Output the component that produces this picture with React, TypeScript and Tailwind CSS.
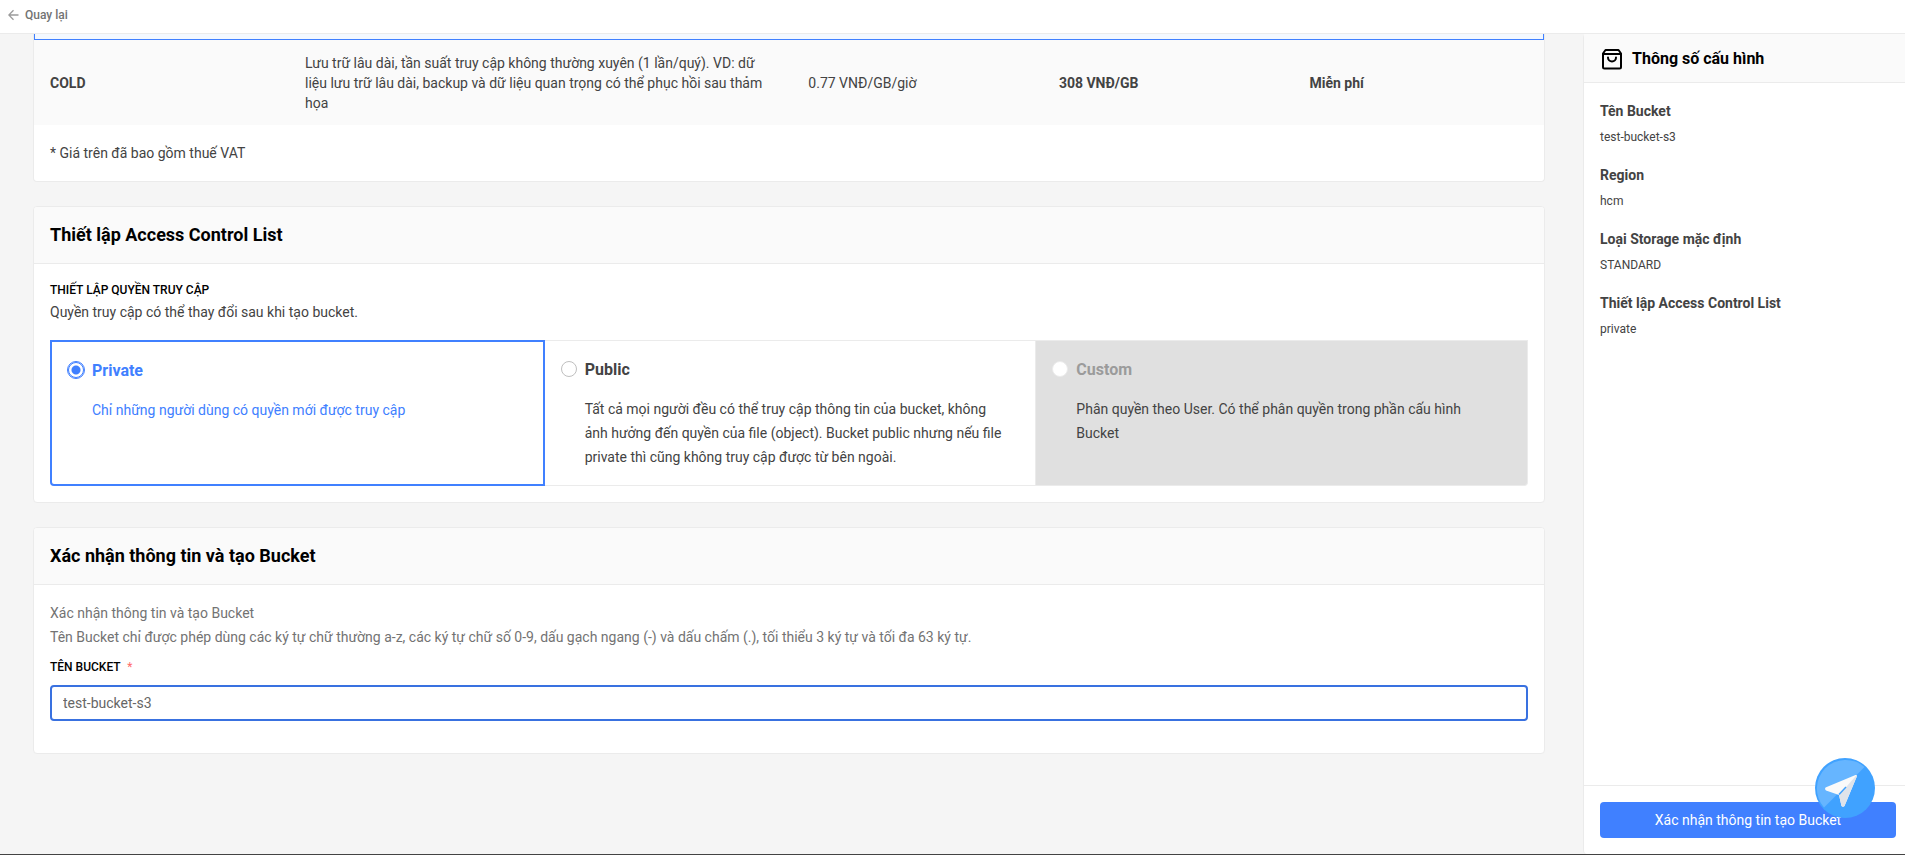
import { useState } from "react";

const storageRow = {
  name: "COLD",
  description:
    "Lưu trữ lâu dài, tần suất truy cập không thường xuyên (1 lần/quý). VD: dữ liệu lưu trữ lâu dài, backup và dữ liệu quan trọng có thể phục hồi sau thảm họa",
  price: "0.77 VNĐ/GB/giờ",
  retrieval: "308 VNĐ/GB",
  request: "Miễn phí",
};

const aclOptions = [
  {
    value: "private",
    title: "Private",
    description: "Chỉ những người dùng có quyền mới được truy cập",
    disabled: false,
  },
  {
    value: "public",
    title: "Public",
    description:
      "Tất cả mọi người đều có thể truy cập thông tin của bucket, không ảnh hưởng đến quyền của file (object). Bucket public nhưng nếu file private thì cũng không truy cập được từ bên ngoài.",
    disabled: false,
  },
  {
    value: "custom",
    title: "Custom",
    description:
      "Phân quyền theo User. Có thể phân quyền trong phần cấu hình Bucket",
    disabled: true,
  },
];

const BackIcon = () => (
  <svg width="12" height="12" viewBox="0 0 12 12" fill="none" aria-hidden="true">
    <path d="M10.500 6H.8M5.500 1.200.8 6 5.500 10.800" stroke="#9b9b9b" strokeWidth="1.3" />
  </svg>
);

const BagIcon = () => (
  <svg
    width="24"
    height="24"
    viewBox="0 0 24 24"
    fill="none"
    stroke="#000"
    strokeWidth="2"
    strokeLinecap="round"
    strokeLinejoin="round"
    aria-hidden="true"
  >
    <path d="M5.500 3h13L21 6.500V20a1.500 1.500 0 0 1-1.500 1.500h-15A1.500 1.500 0 0 1 3 20V6.500L5.500 3Z" />
    <path d="M3.500 7h17M8 10.500a4 4 0 0 0 8 0" />
  </svg>
);

const PlaneIcon = () => (
  <svg width="60" height="60" viewBox="0 0 60 60" aria-hidden="true">
    <circle cx="30" cy="30" r="30" fill="#40a2ff" />
    <path d="M9 49.500A28.700 28.700 0 0 1 49.500 9Z" fill="#66b5ff" />
    <path
      d="M10.500 29.500 40.500 17Q42.500 16.500 41.800 18.500L29.500 48Q28 49.500 26.500 48L24 37 11 32.500Q9.200 31 10.500 29.500Z"
      fill="#fafafa"
    />
    <path
      d="M41.500 17.200Q42.300 17.300 41.800 18.500L29.500 48Q28 49.500 26.500 48L24 37Z"
      fill="#dfe3ea"
    />
    <path d="M24 36.500 31 29" stroke="#40a2ff" strokeWidth="1.500" />
  </svg>
);

const Card = ({
  title,
  children,
}: {
  title: string;
  children: React.ReactNode;
}) => (
  <section className="rounded border border-[#ebebeb] bg-white overflow-hidden">
    <h2 className="px-4 py-4 text-lg leading-6 font-bold text-black bg-[#fafafa] border-b border-[#ebebeb]">
      {title}
    </h2>
    {children}
  </section>
);

const SummaryItem = ({ label, value }: { label: string; value: string }) => (
  <div>
    <dt className="text-sm leading-6 font-bold">{label}</dt>
    <dd className="mt-1 text-xs leading-5">{value}</dd>
  </div>
);

const App = () => {
  const [acl, setAcl] = useState("private");
  const [bucketName, setBucketName] = useState("test-bucket-s3");

  function optionStyle(value: string, disabled: boolean) {
    if (disabled) return "border-y border-r border-[#ebebeb] bg-[#e0e0e0]";
    if (value === acl) return "border-2 border-[#4080ff] text-[#4080ff]";
    return "border-y border-r border-[#ebebeb] cursor-pointer";
  }

  return (
    <div className="h-screen flex flex-col bg-[#f5f5f5] text-sm text-[#434343] border-b border-[#434343] font-['Roboto',sans-serif]">
      <header className="h-[34px] shrink-0 px-2 pb-1 flex items-center bg-white border-b border-[#ebebeb]">
        <a
          href="#"
          className="flex items-center gap-[5px] text-xs font-medium text-[#737373]"
        >
          <BackIcon />
          Quay lại
        </a>
      </header>

      <div className="flex flex-1 min-h-0">
        <main className="flex-1 min-w-0 pl-[33px] pr-[38px] flex flex-col gap-6 overflow-hidden">
          <section className="shrink-0 rounded-b border border-t-0 border-[#ebebeb] bg-white">
            <table className="w-full table-fixed border-separate border-spacing-0 text-left">
              <colgroup>
                <col className="w-[255px]" />
                <col className="w-1/3" />
                <col />
                <col />
                <col />
              </colgroup>
              <tbody>
                <tr>
                  <td
                    colSpan={5}
                    className="h-[6px] p-0 bg-[#f3f8ff] border border-t-0 border-[#4080ff]"
                  />
                </tr>
                <tr className="h-[85px] bg-[#fafafa]">
                  <th className="px-4 font-bold">{storageRow.name}</th>
                  <td className="px-4 leading-5">{storageRow.description}</td>
                  <td className="px-4">{storageRow.price}</td>
                  <td className="px-4 font-bold">{storageRow.retrieval}</td>
                  <td className="px-4 font-bold">{storageRow.request}</td>
                </tr>
              </tbody>
            </table>
            <p className="p-4 leading-6">* Giá trên đã bao gồm thuế VAT</p>
          </section>

          <Card title="Thiết lập Access Control List">
            <div className="p-4">
              <h3 className="text-xs leading-5 font-medium text-black uppercase">
                Thiết lập quyền truy cập
              </h3>
              <p className="leading-6">
                Quyền truy cập có thể thay đổi sau khi tạo bucket.
              </p>
              <div className="mt-4 flex rounded-b">
                {aclOptions.map((option) => (
                  <label
                    key={option.value}
                    className={`flex-1 p-4 flex items-start gap-2 first:rounded-bl last:rounded-br ${optionStyle(option.value, option.disabled)}`}
                  >
                    <input
                      type="radio"
                      name="acl"
                      value={option.value}
                      checked={acl === option.value}
                      disabled={option.disabled}
                      onChange={() => setAcl(option.value)}
                      className="appearance-none mt-1 size-4 shrink-0 rounded-full bg-white border border-[#bfbfbf] checked:border-[#4080ff] checked:outline checked:outline-[#4080ff] checked:bg-[radial-gradient(circle,#4080ff_4px,#fff_5px)] disabled:border-[#ebebeb]"
                    />
                    <span className="flex flex-col gap-[14px] leading-6">
                      <span
                        className={`text-base leading-[26px] font-bold ${option.disabled ? "text-[#9b9b9b]" : ""}`}
                      >
                        {option.title}
                      </span>
                      <span className="pr-2.5">{option.description}</span>
                    </span>
                  </label>
                ))}
              </div>
            </div>
          </Card>

          <Card title="Xác nhận thông tin và tạo Bucket">
            <div className="px-4 pt-4 pb-8">
              <p className="leading-6 text-[#737373]">
                Xác nhận thông tin và tạo Bucket
                <br />
                Tên Bucket chỉ được phép dùng các ký tự chữ thường a-z, các ký
                tự chữ số 0-9, dấu gạch ngang (-) và dấu chấm (.), tối thiểu 3
                ký tự và tối đa 63 ký tự.
              </p>
              <label
                htmlFor="bucketName"
                className="block my-2 text-xs leading-5 font-medium text-black uppercase"
              >
                Tên Bucket{" "}
                <span className="ml-1 font-normal text-[#ff6b6b]">*</span>
              </label>
              <input
                id="bucketName"
                type="text"
                value={bucketName}
                onChange={(e) => setBucketName(e.target.value)}
                className="block w-full h-9 px-[11px] rounded border-2 border-[#3971e0] bg-white text-[#666] outline-none"
              />
            </div>
          </Card>
        </main>

        <aside className="w-[322px] shrink-0 flex flex-col bg-white border-l border-[#ebebeb] rounded-l">
          <h2 className="h-[49px] pt-px px-4 flex items-center gap-2 text-base leading-[26px] font-bold text-black bg-[#fafafa] border-b border-[#ebebeb]">
            <BagIcon />
            Thông số cấu hình
          </h2>
          <dl className="flex-1 p-4 flex flex-col gap-4">
            <SummaryItem label="Tên Bucket" value={bucketName} />
            <SummaryItem label="Region" value="hcm" />
            <SummaryItem label="Loại Storage mặc định" value="STANDARD" />
            <SummaryItem label="Thiết lập Access Control List" value={acl} />
          </dl>
          <div className="relative py-4 pl-4 pr-[9px] border-t border-[#ebebeb]">
            <button
              type="button"
              className="w-full h-9 rounded bg-[#4080ff] text-white"
            >
              Xác nhận thông tin tạo Bucket
            </button>
            <button
              type="button"
              aria-label="Chat"
              className="absolute right-[30px] bottom-9 rounded-full"
            >
              <PlaneIcon />
            </button>
          </div>
        </aside>
      </div>
    </div>
  );
};
export default App;
